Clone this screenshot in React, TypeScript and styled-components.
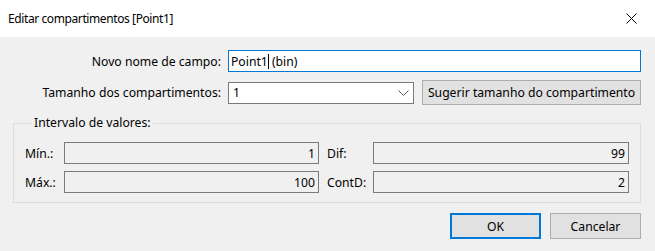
import styled, { createGlobalStyle } from 'styled-components';

const GlobalStyle = createGlobalStyle`
  html, body {
    margin: 0;
    padding: 0;
    background: #f0f0f0;
  }
  body {
    font-family: 'Noto Sans', 'Open Sans', sans-serif;
    font-size: 12.2px;
    color: #000;
  }
`;

const App = () => {
  return (
    <>
      <GlobalStyle />
      <Window>
        <TitleBar>
          <Title>Editar compartimentos [Point1]</Title>
          <CloseButton aria-label="Fechar">
            <svg width="11" height="11" viewBox="0 0 11 11">
              <path d="M0.5 0.5 L10.5 10.5 M10.5 0.5 L0.5 10.5" stroke="#000" strokeWidth="1" fill="none" />
            </svg>
          </CloseButton>
        </TitleBar>

        <Body>
          <FormRow>
            <Label>Novo nome de campo:</Label>
            <TextInput $focused>
              Point1<Caret />&nbsp;(bin)
            </TextInput>
          </FormRow>

          <FormRow>
            <Label>Tamanho dos compartimentos:</Label>
            <SizeRow>
              <Select>
                <span>1</span>
                <svg width="11" height="6" viewBox="0 0 11 6">
                  <path d="M0.5 0.5 L5.5 5.5 L10.5 0.5" stroke="#5a5a5a" strokeWidth="1" fill="none" />
                </svg>
              </Select>
              <Button $wide>Sugerir tamanho do compartimento</Button>
            </SizeRow>
          </FormRow>

          <GroupBox>
            <Legend>Intervalo de valores:</Legend>
            <RangeGrid>
              <FieldLabel>Mín.:</FieldLabel>
              <ReadOnlyField>1</ReadOnlyField>
              <FieldLabel $indent>Dif:</FieldLabel>
              <ReadOnlyField>99</ReadOnlyField>

              <FieldLabel>Máx.:</FieldLabel>
              <ReadOnlyField>100</ReadOnlyField>
              <FieldLabel $indent>ContD:</FieldLabel>
              <ReadOnlyField>2</ReadOnlyField>
            </RangeGrid>
          </GroupBox>

          <Actions>
            <Button $primary>OK</Button>
            <Button>Cancelar</Button>
          </Actions>
        </Body>
      </Window>
    </>
  );
};

export default App;

const Window = styled.div`
  width: 655px;
  height: 251px;
  display: flex;
  flex-direction: column;
  background: #f0f0f0;
`;

const TitleBar = styled.div`
  height: 37px;
  background: #ffffff;
  display: flex;
  align-items: center;
  justify-content: space-between;
  padding-left: 8px;
  box-sizing: border-box;
`;

const Title = styled.div`
  font-size: 12px;
  letter-spacing: -0.4px;
  color: #000;
`;

const CloseButton = styled.div`
  width: 46px;
  height: 37px;
  display: flex;
  align-items: center;
  justify-content: center;
  margin-right: 1px;
`;

const Body = styled.div`
  padding: 13px 14px 0 13px;
  display: flex;
  flex-direction: column;
`;

const FormRow = styled.div`
  display: grid;
  grid-template-columns: 208px 413px;
  column-gap: 7px;
  align-items: center;
  margin-bottom: 8px;
`;

const Label = styled.div`
  text-align: right;
  white-space: nowrap;
`;

const TextInput = styled.div<{ $focused?: boolean }>`
  height: 22px;
  box-sizing: border-box;
  border: 1px solid ${(p) => (p.$focused ? '#0078d7' : '#7a7a7a')};
  background: #fff;
  padding-left: 2px;
  display: flex;
  align-items: center;
  white-space: pre;
`;

const Caret = styled.span`
  display: inline-block;
  width: 1px;
  height: 15px;
  background: #000;
`;

const SizeRow = styled.div`
  display: flex;
  align-items: center;
  gap: 8px;
  height: 25px;
`;

const Select = styled.div`
  width: 186px;
  height: 22px;
  box-sizing: border-box;
  border: 1px solid #7a7a7a;
  background: #fff;
  display: flex;
  align-items: center;
  justify-content: space-between;
  padding: 0 4px 0 4px;
`;

const Button = styled.div<{ $primary?: boolean; $wide?: boolean }>`
  width: ${(p) => (p.$wide ? '219px' : '91px')};
  height: ${(p) => (p.$wide ? '25px' : '26px')};
  box-sizing: border-box;
  background: #e1e1e1;
  border: ${(p) => (p.$primary ? '2px solid #0078d7' : '1px solid #adadad')};
  display: flex;
  align-items: center;
  justify-content: center;
  white-space: nowrap;
`;

const GroupBox = styled.fieldset`
  margin: 2px 0 0 0;
  padding: 11px 11px 9px 11px;
  border: 1px solid #dcdcdc;
  min-width: 0;
`;

const Legend = styled.legend`
  padding: 0 2px;
  margin-left: 7px;
  line-height: 16px;
`;

const RangeGrid = styled.div`
  display: grid;
  grid-template-columns: 39px 255px 54px 256px;
  row-gap: 7px;
  align-items: center;
`;

const FieldLabel = styled.div<{ $indent?: boolean }>`
  padding-left: ${(p) => (p.$indent ? '8px' : '0')};
  white-space: nowrap;
`;

const ReadOnlyField = styled.div`
  height: 22px;
  box-sizing: border-box;
  border: 1px solid #7a7a7a;
  background: #f0f0f0;
  display: flex;
  align-items: center;
  justify-content: flex-end;
  padding-right: 3px;
`;

const Actions = styled.div`
  display: flex;
  justify-content: flex-end;
  gap: 9px;
  margin-top: 10px;
`;
